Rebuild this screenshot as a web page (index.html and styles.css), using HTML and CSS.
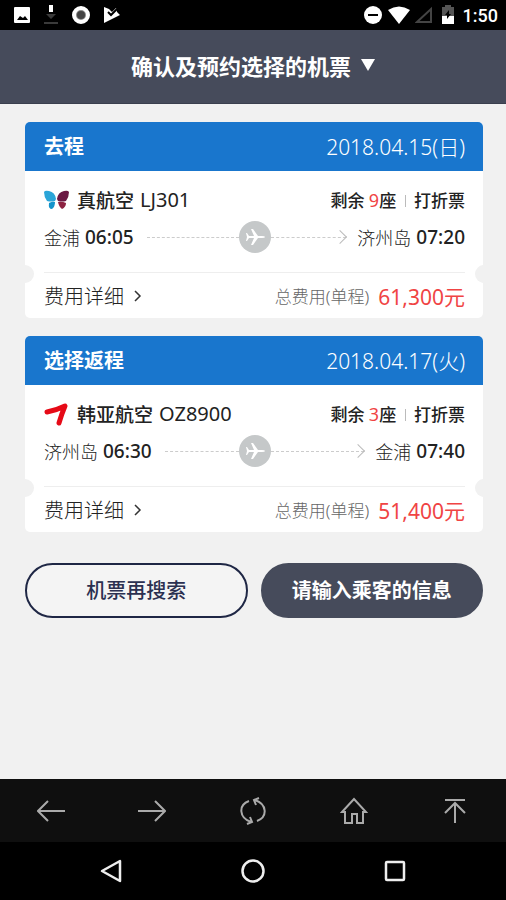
FILE: index.html
```html
<!DOCTYPE html>
<html lang="zh-CN">
<head>
  <meta charset="UTF-8" />
  <meta name="viewport" content="width=device-width, initial-scale=1" />
  <title>确认及预约选择的机票</title>
  <link rel="stylesheet" href="styles.css">
</head>
<body>
  <!-- status bar -->
  <div class="status-bar">
    <div class="status-icons">
      <svg width="18" height="18" viewBox="0 0 18 18"><path fill="#fff" fill-rule="evenodd" d="M2 1h14q1 0 1 1v14q0 1-1 1H2q-1 0-1-1V2q0-1 1-1zM4 14h11l-3-4-2 2-3-2z"/></svg>
      <svg width="16" height="20" viewBox="0 0 16 20"><path fill="#fff" d="M6 0h4v7H6z"/><path fill="#3a3a3a" d="M3 9h10l-5 5zM1 17h14v2H1z"/></svg>
      <svg width="20" height="20" viewBox="0 0 20 20"><circle cx="10" cy="10" r="7" fill="#888" stroke="#fff" stroke-width="4"/><circle cx="10" cy="10" r="4" fill="#444"/></svg>
      <svg width="18" height="18" viewBox="0 0 18 18"><path fill="#fff" d="M1 1l5 2 3 3 4-4 1 4 3 3L1 17z"/><path fill="none" stroke="#000" stroke-width="2" d="M5 6l3 3 6-6"/></svg>
    </div>
    <div class="status-icons status-right">
      <svg width="20" height="20" viewBox="0 0 20 20"><circle cx="10" cy="10" r="9" fill="#fff"/><path fill="#000" d="M5 9h10v2H5z"/></svg>
      <svg width="22" height="18" viewBox="0 0 22 18"><path fill="#fff" d="M0 4q11-7 22 0L11 18z"/></svg>
      <svg width="18" height="18" viewBox="0 0 18 18"><path fill="none" stroke="#444" stroke-width="2" d="M2 16L16 3v13z"/></svg>
      <svg class="battery" width="14" height="20" viewBox="0 0 14 20"><path fill="#555" d="M4 0h6v2h3v9H1V2h3z"/><path fill="#fff" d="M1 11h12v8H1z"/><path fill="#000" d="M8 5l-4 5h2v4l4-5H8z"/></svg>
      <span class="clock">1:50</span>
    </div>
  </div>

  <!-- title -->
  <header class="header">
    <button class="title-btn">确认及预约选择的机票
      <svg width="14" height="12" viewBox="0 0 14 12"><path fill="#fff" d="M0 0h14L7 12z"/></svg>
    </button>
  </header>

  <main class="content">
    <section class="ticket">
      <div class="ticket-head">
        <h2>去程</h2>
        <span class="date">2018.04.15(日)</span>
      </div>
      <div class="ticket-body">
        <div class="row airline-row">
          <div class="airline">
            <svg class="logo" width="26" height="22" viewBox="0 0 26 22"><path fill="#2ba5d8" d="M0 3Q1 1 5 2q6 1 7 8l-1 2q-4 1-8 0Q0 8 0 3z"/><path fill="#1493ca" d="M5 14q4-2 6-1 0 5-3 7-4 0-3-6z"/><path fill="#6b1843" d="M25 3q-1-2-5-1-6 1-7 8l1 2q4 1 8 0 3-4 3-9z"/><path fill="#8d2241" d="M14 13q4-1 8 1 0 4-4 6-3-2-4-7z"/></svg>
            <strong>真航空</strong><span class="flight">LJ301</span>
          </div>
          <div class="seats">剩余 <em>9</em>座 <i></i> 打折票</div>
        </div>
        <div class="route-row">
          <div class="place">金浦 <b>06:05</b><span class="line"></span></div>
          <svg class="plane" width="32" height="32" viewBox="0 0 32 32"><circle cx="16" cy="16" r="16" fill="#c5c8c9"/><path fill="#fff" d="M26 16q0-1-3-1h-4l-5-7h-2l3 7h-5l-2-3H7l1 4-1 4h1l2-3h5l-3 7h2l5-7h4q3 0 3-1z"/></svg>
          <div class="place"><span class="line arrow"></span>济州岛 <b>07:20</b></div>
        </div>
      </div>
      <div class="ticket-foot">
        <a class="detail" href="#">费用详细
          <svg width="8" height="12" viewBox="0 0 8 12"><path fill="none" stroke="#333" stroke-width="1.5" d="M1 1l5 5-5 5"/></svg>
        </a>
        <div class="total">总费用(单程) <span class="price">61,300元</span></div>
      </div>
    </section>

    <section class="ticket">
      <div class="ticket-head">
        <h2>选择返程</h2>
        <span class="date">2018.04.17(火)</span>
      </div>
      <div class="ticket-body">
        <div class="row airline-row">
          <div class="airline">
            <svg class="logo" width="26" height="24" viewBox="0 0 26 24"><path fill="none" stroke="#e60a17" stroke-width="5" stroke-linecap="round" stroke-linejoin="round" d="M3 10q10-2 18-6-3 7-6 17"/></svg>
            <strong>韩亚航空</strong><span class="flight">OZ8900</span>
          </div>
          <div class="seats">剩余 <em>3</em>座 <i></i> 打折票</div>
        </div>
        <div class="route-row">
          <div class="place">济州岛 <b>06:30</b><span class="line"></span></div>
          <svg class="plane" width="32" height="32" viewBox="0 0 32 32"><circle cx="16" cy="16" r="16" fill="#c5c8c9"/><path fill="#fff" d="M26 16q0-1-3-1h-4l-5-7h-2l3 7h-5l-2-3H7l1 4-1 4h1l2-3h5l-3 7h2l5-7h4q3 0 3-1z"/></svg>
          <div class="place"><span class="line arrow"></span>金浦 <b>07:40</b></div>
        </div>
      </div>
      <div class="ticket-foot">
        <a class="detail" href="#">费用详细
          <svg width="8" height="12" viewBox="0 0 8 12"><path fill="none" stroke="#333" stroke-width="1.5" d="M1 1l5 5-5 5"/></svg>
        </a>
        <div class="total">总费用(单程) <span class="price">51,400元</span></div>
      </div>
    </section>

    <div class="actions">
      <button class="btn btn-line">机票再搜索</button>
      <button class="btn btn-fill">请输入乘客的信息</button>
    </div>
  </main>

  <!-- browser toolbar -->
  <nav class="toolbar">
    <button aria-label="后退"><svg width="28" height="28" viewBox="0 0 28 28"><path d="M28 14H1M11 4L1 14l10 10"/></svg></button>
    <button aria-label="前进"><svg width="28" height="28" viewBox="0 0 28 28"><path d="M0 14h27M17 4l10 10-10 10"/></svg></button>
    <button aria-label="刷新"><svg width="28" height="28" viewBox="0 0 28 28"><path d="M10 4C-1 8 0 21 12 25M8 27l5-2-2-5M18 24C29 20 28 7 16 3M20 1l-5 2 2 5"/></svg></button>
    <button aria-label="首页"><svg width="28" height="28" viewBox="0 0 28 28"><path d="M2 15L14 2l12 13h-3v11h-6v-9h-5v9H5V15z"/></svg></button>
    <button aria-label="顶部"><svg width="28" height="28" viewBox="0 0 28 28"><path d="M4 3h20M14 26V6M4 16L14 6l10 10"/></svg></button>
  </nav>

  <!-- android navigation -->
  <nav class="android-nav">
    <button aria-label="返回"><svg width="26" height="26" viewBox="0 0 26 26"><path d="M22 3v20L4 13z"/></svg></button>
    <button aria-label="主屏幕"><svg width="26" height="26" viewBox="0 0 26 26"><circle cx="13" cy="13" r="10.5"/></svg></button>
    <button aria-label="最近任务"><svg width="26" height="26" viewBox="0 0 26 26"><rect x="4" y="4" width="18" height="18" rx="1"/></svg></button>
  </nav>
</body>
</html>
```
FILE: styles.css
```css
* {
  box-sizing: border-box;
}

body {
  font-family: "Noto Sans", "Noto Sans CJK SC", sans-serif;
  font-size: 18px;
  color: #222;
  background-color: #f1f1f1;
  margin: 0;
  min-height: 100vh;
  display: flex;
  flex-direction: column;
}

button {
  font-family: inherit;
  border: none;
  background: none;
  padding: 0;
  cursor: pointer;
}

svg {
  flex-shrink: 0;
}

.status-bar {
  height: 30px;
  padding: 0 8px 0 13px;
  background: #000;
  display: flex;
  align-items: center;
  justify-content: space-between;
}

.status-icons {
  display: flex;
  align-items: center;
  gap: 12px;
}

.status-right {
  gap: 5px;
}

.battery {
  margin-left: 3px;
}

.clock {
  margin-left: 3px;
  font-family: Roboto, sans-serif;
  font-size: 18px;
  font-weight: 500;
  color: #fff;
}

.header {
  height: 74px;
  padding-bottom: 4px;
  background: #464b5b;
  border-bottom: 1px solid #3a3f4e;
  display: flex;
  align-items: center;
  justify-content: center;
}

.title-btn {
  display: flex;
  align-items: center;
  gap: 10px;
  font-size: 22px;
  font-weight: bold;
  color: #fff;
}

.content {
  flex: 1;
  padding: 18px 23px 24px 25px;
}

.ticket {
  margin-bottom: 18px;
  border-radius: 5px;
  background: #fff;
  overflow: hidden;
}

.ticket-head {
  height: 49px;
  padding: 0 18px 2px 19px;
  background: #1976cd;
  color: #fff;
  display: flex;
  align-items: center;
  justify-content: space-between;
}

.ticket-head h2 {
  margin: 0;
  font-size: 20px;
  font-weight: bold;
}

.date {
  font-size: 21px;
  font-weight: 300;
}

.ticket-body {
  height: 101px;
  padding: 11px 18px 0 19px;
}

.row {
  display: flex;
  align-items: center;
  justify-content: space-between;
}

.airline-row {
  height: 35px;
}

.airline {
  display: flex;
  align-items: center;
  gap: 6px;
  font-size: 19px;
}

.airline strong {
  font-weight: 500;
}

.flight {
  font-size: 20px;
}

.logo {
  margin-right: 1px;
}

.seats {
  font-size: 17px;
  font-weight: 500;
}

.seats em {
  font-size: 18px;
  font-style: normal;
  font-weight: 400;
  color: #f04444;
}

.seats i {
  display: inline-block;
  width: 1px;
  height: 12px;
  margin: 0 4px;
  background: #bbb;
}

.route-row {
  height: 40px;
  display: grid;
  grid-template-columns: 1fr auto 1fr;
  align-items: center;
}

.place {
  display: flex;
  align-items: center;
  gap: 5px;
  font-size: 18px;
  font-weight: 300;
  white-space: nowrap;
}

.place b {
  font-size: 19px;
  font-weight: 500;
}

.line {
  flex: 1;
  margin-left: 8px;
  border-top: 1px dashed #ccc;
}

.arrow {
  position: relative;
  margin: 0 6px 0 0;
}

.arrow::after {
  content: "";
  position: absolute;
  right: 1px;
  top: -6px;
  width: 9px;
  height: 9px;
  border-top: 1px solid #bbb;
  border-right: 1px solid #bbb;
  transform: rotate(45deg);
}

.ticket-foot {
  position: relative;
  height: 46px;
  margin: 0 18px 0 19px;
  border-top: 1px solid #eee;
  display: flex;
  align-items: center;
  justify-content: space-between;
}

/* ticket notches */
.ticket-foot::before,
.ticket-foot::after {
  content: "";
  position: absolute;
  top: -8px;
  width: 18px;
  height: 18px;
  border-radius: 50%;
  background: #f1f1f1;
}

.ticket-foot::before {
  left: -28px;
}

.ticket-foot::after {
  right: -28px;
}

.detail {
  display: flex;
  align-items: center;
  gap: 10px;
  font-size: 20px;
  font-weight: 300;
  color: #222;
  text-decoration: none;
}

.total {
  display: flex;
  align-items: center;
  gap: 9px;
  font-size: 17px;
  font-weight: 300;
  color: #666;
}

.price {
  font-size: 21px;
  font-weight: 400;
  color: #f04444;
}

.actions {
  margin-top: 31px;
  display: flex;
  gap: 13px;
}

.btn {
  flex: 1;
  height: 55px;
  padding-bottom: 2px;
  border: 2px solid #1f2745;
  border-radius: 28px;
  font-size: 20px;
}

.btn-line {
  font-weight: 500;
  color: #2b3050;
  background: #f4f4f4;
}

.btn-fill {
  border-color: #464b5b;
  background: #464b5b;
  font-weight: bold;
  color: #fff;
}

.toolbar {
  height: 63px;
  background: #0f0f0f;
  display: flex;
}

.toolbar button {
  flex: 1;
  display: flex;
  align-items: center;
  justify-content: center;
}

.toolbar path {
  fill: none;
  stroke: #aaa;
  stroke-width: 2;
}

.android-nav {
  height: 58px;
  padding: 0 40px;
  background: #000;
  display: flex;
}

.android-nav button {
  flex: 1;
  display: flex;
  align-items: center;
  justify-content: center;
}

.android-nav svg {
  fill: none;
  stroke: #eee;
  stroke-width: 2.5;
  stroke-linejoin: round;
}
```
